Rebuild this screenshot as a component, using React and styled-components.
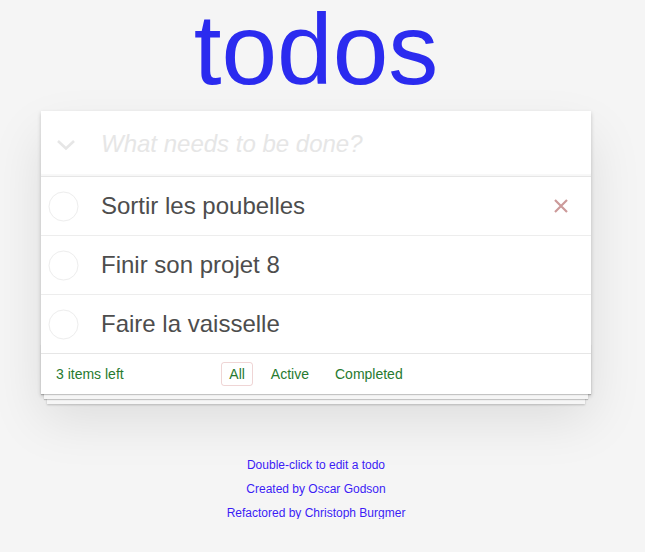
import React, { useState } from 'react'
import styled, { createGlobalStyle } from 'styled-components'

const GlobalStyle = createGlobalStyle`
  html, body {
    margin: 0;
    padding: 0;
  }
  body {
    font: 14px "Liberation Sans", Arial, Helvetica, sans-serif;
    line-height: 1.4em;
    background: #f5f5f5;
    color: #4d4d4d;
    font-weight: 300;
    -webkit-font-smoothing: antialiased;
  }
`

const Page = styled.div`
  width: 632px;
  display: flex;
  justify-content: center;
`

const Column = styled.div`
  width: 550px;
  display: flex;
  flex-direction: column;
`

const Title = styled.h1`
  height: 111px;
  margin: 0;
  font-size: 100px;
  font-weight: 400;
  line-height: 99px;
  text-align: center;
  color: #2b2bef;
`

const TodoApp = styled.section`
  background: #fff;
  position: relative;
  box-shadow: 0 2px 4px 0 rgba(0, 0, 0, 0.2), 0 25px 50px 0 rgba(0, 0, 0, 0.1);
`

const Header = styled.header`
  display: flex;
  align-items: center;
  height: 65px;
  border-bottom: 1px solid #e6e6e6;
  box-shadow: inset 0 -2px 1px rgba(0, 0, 0, 0.03);
`

const ToggleAll = styled.span`
  width: 50px;
  padding-top: 3px;
  display: flex;
  align-items: center;
  justify-content: center;
`

const NewTodo = styled.input`
  flex: 1;
  min-width: 0;
  margin: 0;
  padding: 16px 16px 16px 10px;
  border: none;
  background: transparent;
  font-family: inherit;
  font-size: 24px;
  line-height: 1.4em;
  color: #4d4d4d;
  outline: none;
  &::placeholder {
    font-style: italic;
    font-weight: 300;
    color: #e6e6e6;
  }
`

const List = styled.ul`
  margin: 0;
  padding: 0;
  list-style: none;
`

const Item = styled.li`
  display: flex;
  align-items: center;
  font-size: 24px;
  border-bottom: 1px solid #ededed;
  &:last-child {
    border-bottom: none;
  }
`

const Check = styled.span`
  width: 45px;
  display: flex;
  align-items: center;
  justify-content: center;
`

const Label = styled.label`
  flex: 1;
  padding: 15px;
  line-height: 28px;
  word-break: break-all;
  color: #4d4d4d;
`

const Destroy = styled.button`
  width: 40px;
  height: 40px;
  margin-right: 10px;
  padding: 0;
  border: none;
  background: none;
  display: flex;
  align-items: center;
  justify-content: center;
  visibility: ${p => (p.$visible ? 'visible' : 'hidden')};
  cursor: pointer;
`

const Footer = styled.footer`
  position: relative;
  display: grid;
  grid-template-columns: 1fr auto 1fr;
  align-items: center;
  color: #277a2f;
  padding: 8px 15px 12px;
  height: 20px;
  line-height: 20px;
  border-top: 1px solid #e6e6e6;
  &:before {
    content: '';
    position: absolute;
    right: 0;
    bottom: 0;
    left: 0;
    height: 50px;
    overflow: hidden;
    pointer-events: none;
    box-shadow: 0 1px 1px rgba(0, 0, 0, 0.2), 0 8px 0 -3px #f6f6f6,
      0 9px 1px -3px rgba(0, 0, 0, 0.2), 0 16px 0 -6px #f6f6f6,
      0 17px 2px -6px rgba(0, 0, 0, 0.2);
  }
`

const Count = styled.span`
  text-align: left;
`

const Filters = styled.ul`
  margin: 0;
  padding: 0;
  list-style: none;
  display: flex;
  gap: 4px;
`

const FilterLink = styled.a`
  display: inline-block;
  color: inherit;
  margin: 0 3px;
  padding: 3px 7px;
  line-height: 16px;
  text-decoration: none;
  border: 1px solid ${p => (p.$selected ? 'rgba(175, 47, 47, 0.2)' : 'transparent')};
  border-radius: 3px;
  cursor: pointer;
`

const Info = styled.footer`
  margin-top: 65px;
  color: #3b1cf5;
  font-size: 12px;
  text-shadow: 0 1px 0 rgba(255, 255, 255, 0.5);
  text-align: center;
  display: flex;
  flex-direction: column;
  gap: 12px;
  p {
    line-height: 1;
    margin: 0;
  }
`

const todos = ['Sortir les poubelles', 'Finir son projet 8', 'Faire la vaisselle']

export default function App() {
  const [filter, setFilter] = useState('All')
  return (
    <Page>
      <GlobalStyle />
      <Column>
        <Title>todos</Title>
        <TodoApp>
          <Header>
            <ToggleAll>
              <svg width="20" height="12" viewBox="0 0 20 12">
                <path d="M2 2 L10 9.5 L18 2" fill="none" stroke="#e6e6e6" strokeWidth="2.6" />
              </svg>
            </ToggleAll>
            <NewTodo placeholder="What needs to be done?" />
          </Header>
          <List>
            {todos.map((t, i) => (
              <Item key={t}>
                <Check>
                  <svg width="31" height="31" viewBox="0 0 31 31">
                    <circle cx="15.5" cy="15.5" r="14.5" fill="none" stroke="#ededed" strokeWidth="1" />
                  </svg>
                </Check>
                <Label>{t}</Label>
                <Destroy $visible={i === 0}>
                  <svg width="16" height="16" viewBox="0 0 16 16">
                    <path d="M2 2 L14 14 M14 2 L2 14" stroke="#cc9a9a" strokeWidth="2.2" />
                  </svg>
                </Destroy>
              </Item>
            ))}
          </List>
          <Footer>
            <Count>3 items left</Count>
            <Filters>
              {['All', 'Active', 'Completed'].map(f => (
                <li key={f}>
                  <FilterLink $selected={filter === f} onClick={() => setFilter(f)}>
                    {f}
                  </FilterLink>
                </li>
              ))}
            </Filters>
          </Footer>
        </TodoApp>
        <Info>
          <p>Double-click to edit a todo</p>
          <p>Created by Oscar Godson</p>
          <p>Refactored by Christoph Burgmer</p>
        </Info>
      </Column>
    </Page>
  )
}
